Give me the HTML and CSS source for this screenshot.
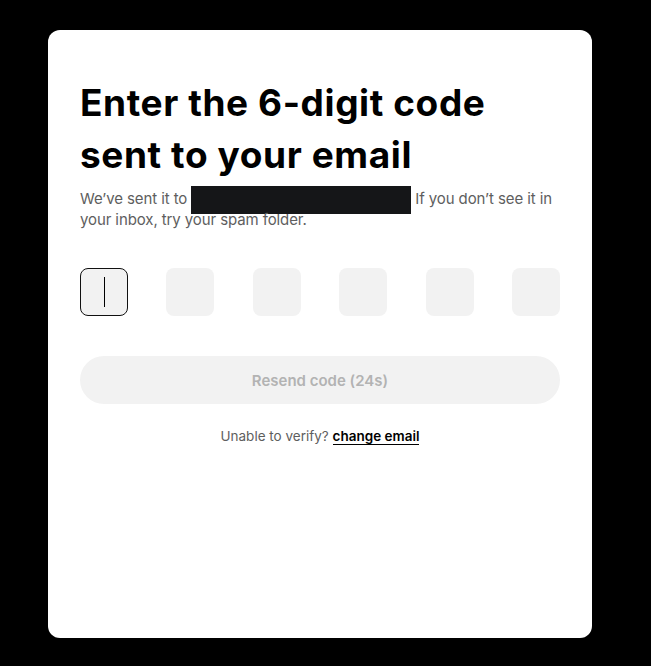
FILE: index.html
```html
<!DOCTYPE html>
<html lang="en">
<head>
<meta charset="utf-8">
<title>Verify email</title>
<link rel="stylesheet" href="styles.css">
</head>
<body>
<div class="page">
  <div class="card">
    <h1 class="title">Enter the 6-digit code sent to your email</h1>
    <p class="desc">We’ve sent it to<span class="redact"></span> If you don’t see it in your inbox, try your spam folder.</p>
    <div class="otp">
      <div class="digit active"><span class="caret"></span></div>
      <div class="digit"></div>
      <div class="digit"></div>
      <div class="digit"></div>
      <div class="digit"></div>
      <div class="digit"></div>
    </div>
    <button class="resend" disabled>Resend code (24s)</button>
    <p class="alt">Unable to verify? <a href="#" class="link">change email</a></p>
  </div>
</div>
</body>
</html>
```
FILE: styles.css
```css
* { box-sizing: border-box; }
html, body { margin: 0; padding: 0; background: #000; }
body { font-family: Inter, "Noto Sans", sans-serif; }
.page {
  width: 651px;
  height: 666px;
  padding: 30px 0 0 48px;
}
.card {
  width: 544px;
  height: 608px;
  background: #fff;
  border-radius: 12px;
  padding: 47px 32px 32px;
}
.title {
  margin: 0;
  max-width: 440px;
  font-size: 37px;
  line-height: 52px;
  font-weight: 700;
  color: #000;
  letter-spacing: 0.6px;
}
.desc {
  margin: 7px 0 0;
  font-size: 15px;
  line-height: 21px;
  color: #5e5e5e;
  letter-spacing: -0.1px;
}
.redact {
  display: inline-block;
  width: 220px;
  height: 28px;
  margin: -8px 0 -8px 4px;
  background: #151618;
  vertical-align: -2px;
}
.otp {
  margin-top: 38px;
  display: flex;
  justify-content: space-between;
}
.digit {
  width: 48px;
  height: 48px;
  border-radius: 8px;
  background: #f2f2f2;
  display: flex;
  align-items: center;
  justify-content: center;
}
.digit.active {
  border: 1px solid #111;
}
.caret {
  width: 1px;
  height: 30px;
  background: #000;
}
.resend {
  display: block;
  width: 100%;
  height: 48px;
  margin-top: 40px;
  border: 0;
  border-radius: 24px;
  background: #f2f2f2;
  color: #b3b3b3;
  font-family: inherit;
  font-size: 15px;
  font-weight: 600;
}
.alt {
  margin: 24px 0 0;
  text-align: center;
  font-size: 13.5px;
  color: #5e5e5e;
}
.link {
  color: #000;
  font-weight: 600;
  text-decoration: none;
  border-bottom: 1.5px solid #000;
}
```
